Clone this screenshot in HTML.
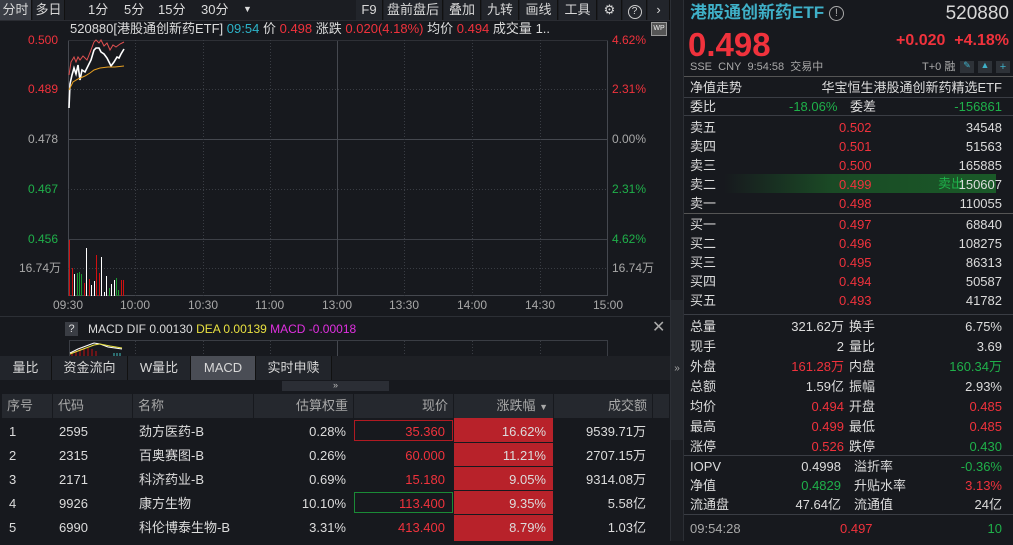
<!DOCTYPE html>
<html><head><meta charset="utf-8">
<style>
*{margin:0;padding:0;box-sizing:border-box}
body{width:1013px;height:541px;background:#17191e;font-family:"Liberation Sans","Noto Sans CJK SC",sans-serif;font-size:13px;color:#d0d0d0;position:relative;overflow:hidden}
.a{position:absolute;white-space:nowrap;line-height:1}
.r{color:#f0323c}.g{color:#1fb04a}.w{color:#dcdcdc}.gy{color:#a8a8a8}
.tb{position:absolute;top:0;height:20px;background:#22252b;border-right:1px solid #111;line-height:20px;text-align:center;color:#d8d8d8;font-size:13px}
.hl{position:absolute;height:1px;background:#3a3d44}
.th{position:absolute;top:394px;height:24px;background:#25282e;border-right:1px solid #17191e;color:#a8a8a8;line-height:24px;padding:0 5px}
</style></head><body>
<!-- toolbar -->
<div class="a" style="left:0;top:0;width:670px;height:20px;background:#1b1d22"></div>
<div class="tb" style="left:0;width:32px;background:#3a3d45">分时</div>
<div class="tb" style="left:33px;width:32px">多日</div>
<div class="a w" style="left:88px;top:3px">1分</div>
<div class="a w" style="left:124px;top:3px">5分</div>
<div class="a w" style="left:158px;top:3px">15分</div>
<div class="a w" style="left:201px;top:3px">30分</div>
<div class="a w" style="left:243px;top:5px;font-size:9px">▼</div>
<div class="tb" style="left:356px;width:27px">F9</div>
<div class="tb" style="left:384px;width:59px">盘前盘后</div>
<div class="tb" style="left:444px;width:37px">叠加</div>
<div class="tb" style="left:482px;width:37px">九转</div>
<div class="tb" style="left:520px;width:38px">画线</div>
<div class="tb" style="left:559px;width:38px">工具</div>
<div class="tb" style="left:598px;width:24px">⚙</div>
<div class="tb" style="left:623px;width:24px"><span style="display:inline-block;width:14px;height:14px;border:1px solid #ccc;border-radius:50%;line-height:12px;font-size:10px">?</span></div>
<div class="tb" style="left:648px;width:22px">›</div>
<div class="hl" style="left:0;top:20px;width:670px;background:#2a2c32"></div>
<!-- chart header -->
<div class="a" style="left:70px;top:22px;font-size:13px"><span class="w">520880[港股通创新药ETF]</span> <span style="color:#2cb3c8">09:54</span> <span class="w">价</span> <span class="r">0.498</span> <span class="w">涨跌</span> <span class="r">0.020(4.18%)</span> <span class="w">均价</span> <span class="r">0.494</span> <span class="w">成交量</span> <span class="w">1..</span></div>
<div class="a" style="left:651px;top:22px;width:16px;height:14px;border:1px solid #999;background:#555;font-size:7px;color:#eee;text-align:center;line-height:12px">WP</div>
<!-- chart svg -->
<svg class="a" style="left:0;top:0" width="670" height="320">
<g stroke="#3a3d44" stroke-width="1" fill="none">
<line x1="68" y1="139.5" x2="608" y2="139.5" stroke="#45484f"/>
<line x1="68" y1="239.5" x2="608" y2="239.5" stroke="#3d4047"/>
<line x1="68.5" y1="40" x2="68.5" y2="296" stroke="#45484f"/>
<line x1="337.5" y1="40" x2="337.5" y2="296" stroke="#45484f"/>
<line x1="607.5" y1="40" x2="607.5" y2="296" stroke="#45484f"/>
<line x1="68" y1="295.5" x2="608" y2="295.5" stroke="#45484f"/>
<line x1="68" y1="40.5" x2="608" y2="40.5" stroke="#2e3036"/>
</g>
<g stroke="#3a3d44" stroke-dasharray="1,2" fill="none">
<line x1="68" y1="89.5" x2="608" y2="89.5"/><line x1="68" y1="189.5" x2="608" y2="189.5"/><line x1="68" y1="268.5" x2="608" y2="268.5"/>
<line x1="135.5" y1="40" x2="135.5" y2="296"/><line x1="203.5" y1="40" x2="203.5" y2="296"/><line x1="270.5" y1="40" x2="270.5" y2="296"/><line x1="404.5" y1="40" x2="404.5" y2="296"/><line x1="472.5" y1="40" x2="472.5" y2="296"/><line x1="540.5" y1="40" x2="540.5" y2="296"/>
</g>
<polyline fill="none" stroke="#e05050" stroke-width="1" points="69,75 71,62 74,57 76,62 78,57 80,60 83,56 87,60 91,50 94,42 96,40 99,43 101,40 104,46 107,43 110,50 113,45 116,47 120,44 124,42"/>
<polyline fill="none" stroke="#fff" stroke-width="1.6" points="69,108 70,84 72,75 74,68 76,74 78,65 80,80 82,70 85,72 88,66 91,60 94,50 96,48 99,48 101,52 104,54 107,58 109,62 111,66 114,62 117,57 119,58 121,54 124,49"/>
<polyline fill="none" stroke="#e8a020" stroke-width="1" points="69,90 73,82 78,79 85,76 90,73 94,70 100,68 108,67 115,67 124,66"/>
<g stroke-width="1">
<line x1="69.5" y1="296" x2="69.5" y2="240" stroke="#d01010"/><line x1="72.5" y1="296" x2="72.5" y2="268" stroke="#d01010"/><line x1="74.5" y1="296" x2="74.5" y2="274" stroke="#fff"/><line x1="77.5" y1="296" x2="77.5" y2="273" stroke="#1a9a30"/><line x1="79.5" y1="296" x2="79.5" y2="272" stroke="#1a9a30"/><line x1="81.5" y1="296" x2="81.5" y2="274" stroke="#1a9a30"/><line x1="84.5" y1="296" x2="84.5" y2="283" stroke="#d01010"/><line x1="86.5" y1="296" x2="86.5" y2="248" stroke="#fff"/><line x1="89.5" y1="296" x2="89.5" y2="279" stroke="#d01010"/><line x1="91.5" y1="296" x2="91.5" y2="285" stroke="#fff"/><line x1="94.5" y1="296" x2="94.5" y2="281" stroke="#fff"/><line x1="96.5" y1="296" x2="96.5" y2="255" stroke="#d01010"/><line x1="99.5" y1="296" x2="99.5" y2="273" stroke="#d01010"/><line x1="101.5" y1="296" x2="101.5" y2="257" stroke="#fff"/><line x1="104.5" y1="296" x2="104.5" y2="292" stroke="#fff"/><line x1="106.5" y1="296" x2="106.5" y2="276" stroke="#fff"/><line x1="109.5" y1="296" x2="109.5" y2="288" stroke="#1a9a30"/><line x1="111.5" y1="296" x2="111.5" y2="284" stroke="#fff"/><line x1="114.5" y1="296" x2="114.5" y2="280" stroke="#fff"/><line x1="116.5" y1="296" x2="116.5" y2="278" stroke="#1a9a30"/><line x1="118.5" y1="296" x2="118.5" y2="290" stroke="#1a9a30"/><line x1="121.5" y1="296" x2="121.5" y2="280" stroke="#d01010"/><line x1="123.5" y1="296" x2="123.5" y2="280" stroke="#d01010"/>
</g>
</svg>
<div class="a r" style="left:28px;top:34px;font-size:12px">0.500</div>
<div class="a r" style="left:28px;top:83px;font-size:12px">0.489</div>
<div class="a gy" style="left:28px;top:133px;font-size:12px">0.478</div>
<div class="a g" style="left:28px;top:183px;font-size:12px">0.467</div>
<div class="a g" style="left:28px;top:233px;font-size:12px">0.456</div>
<div class="a gy" style="left:19px;top:262px;font-size:12px">16.74万</div>
<div class="a r" style="left:612px;top:34px;font-size:12px">4.62%</div>
<div class="a r" style="left:612px;top:83px;font-size:12px">2.31%</div>
<div class="a gy" style="left:612px;top:133px;font-size:12px">0.00%</div>
<div class="a g" style="left:612px;top:183px;font-size:12px">2.31%</div>
<div class="a g" style="left:612px;top:233px;font-size:12px">4.62%</div>
<div class="a gy" style="left:612px;top:262px;font-size:12px">16.74万</div>
<div class="a gy" style="left:53px;top:299px;font-size:12px">09:30</div>
<div class="a gy" style="left:120px;top:299px;font-size:12px">10:00</div>
<div class="a gy" style="left:188px;top:299px;font-size:12px">10:30</div>
<div class="a gy" style="left:255px;top:299px;font-size:12px">11:00</div>
<div class="a gy" style="left:322px;top:299px;font-size:12px">13:00</div>
<div class="a gy" style="left:389px;top:299px;font-size:12px">13:30</div>
<div class="a gy" style="left:457px;top:299px;font-size:12px">14:00</div>
<div class="a gy" style="left:525px;top:299px;font-size:12px">14:30</div>
<div class="a gy" style="left:593px;top:299px;font-size:12px">15:00</div>
<div class="hl" style="left:0;top:316px;width:670px;background:#2c2f35"></div>
<!-- MACD -->
<div class="a" style="left:65px;top:322px;width:13px;height:14px;background:#3a3d44;color:#ddd;font-size:11px;text-align:center;line-height:14px">?</div>
<div class="a" style="left:88px;top:323px;font-size:12px"><span class="w">MACD DIF 0.00130</span> <span style="color:#e8e040">DEA 0.00139</span> <span style="color:#e030e0">MACD -0.00018</span></div>
<div class="a" style="left:652px;top:320px;color:#aaa;font-size:16px">✕</div>
<svg class="a" style="left:0;top:339px" width="670" height="17"><rect x="69.5" y="1.5" width="538" height="20" fill="none" stroke="#3a3d44"/>
<g stroke="#3a3d44" stroke-dasharray="1,2"><line x1="135.5" y1="2" x2="135.5" y2="17"/><line x1="203.5" y1="2" x2="203.5" y2="17"/><line x1="270.5" y1="2" x2="270.5" y2="17"/><line x1="404.5" y1="2" x2="404.5" y2="17"/><line x1="472.5" y1="2" x2="472.5" y2="17"/><line x1="540.5" y1="2" x2="540.5" y2="17"/></g>
<line x1="337.5" y1="2" x2="337.5" y2="17" stroke="#45484f"/>
<g stroke="#c01010"><line x1="72" y1="17" x2="72" y2="13"/><line x1="76" y1="17" x2="76" y2="12"/><line x1="80" y1="17" x2="80" y2="10"/><line x1="84" y1="17" x2="84" y2="9"/><line x1="88" y1="17" x2="88" y2="9"/><line x1="92" y1="17" x2="92" y2="10"/><line x1="96" y1="17" x2="96" y2="12"/></g>
<g stroke="#40c0c0"><line x1="114" y1="17" x2="114" y2="14"/><line x1="117" y1="17" x2="117" y2="14"/><line x1="120" y1="17" x2="120" y2="14"/></g>
<polyline points="70,14 78,10 86,7 94,4 100,5 108,8 122,10" fill="none" stroke="#fff"/><polyline points="70,15 78,12 86,9 94,6 100,5 110,7 122,9" fill="none" stroke="#e8e040"/></svg>
<!-- tabs -->
<div class="a" style="left:0;top:356px;width:670px;height:24px;background:#1e2025"></div>
<div class="tb" style="top:356px;left:0;width:52px;height:24px;line-height:24px">量比</div>
<div class="tb" style="top:356px;left:52px;width:76px;height:24px;line-height:24px">资金流向</div>
<div class="tb" style="top:356px;left:128px;width:63px;height:24px;line-height:24px">W量比</div>
<div class="tb" style="top:356px;left:191px;width:65px;height:24px;line-height:24px;background:#4a4d55">MACD</div>
<div class="tb" style="top:356px;left:256px;width:76px;height:24px;line-height:24px">实时申赎</div>
<div class="a" style="left:282px;top:381px;width:107px;height:10px;background:#2b2e35;color:#bbb;font-size:9px;text-align:center">»</div>
<!-- table -->
<div class="th" style="left:2px;width:51px">序号</div>
<div class="th" style="left:53px;width:80px">代码</div>
<div class="th" style="left:133px;width:121px">名称</div>
<div class="th" style="left:254px;width:100px;text-align:right">估算权重</div>
<div class="th" style="left:354px;width:100px;text-align:right">现价</div>
<div class="th" style="left:454px;width:100px;text-align:right">涨跌幅 <span style="font-size:9px">▼</span></div>
<div class="th" style="left:554px;width:99px;text-align:right">成交额</div>
<div class="th" style="left:653px;width:17px"></div>
<div class="a" style="left:454px;top:418px;width:99px;height:123px;background:#b8222a"></div>
<div class="a" style="left:454px;top:442px;width:99px;height:1px;background:#17191e"></div>
<div class="a" style="left:454px;top:466px;width:99px;height:1px;background:#17191e"></div>
<div class="a" style="left:454px;top:490px;width:99px;height:1px;background:#17191e"></div>
<div class="a" style="left:454px;top:514px;width:99px;height:1px;background:#17191e"></div>
<div class="a" style="left:354px;top:420px;width:99px;height:21px;border:1px solid #b01a22"></div>
<div class="a" style="left:354px;top:492px;width:99px;height:21px;border:1px solid #1a8a36"></div>
<div style="position:absolute;left:0;top:425px;width:670px;font-size:13px">
<div style="position:relative;height:24px"><span class="a w" style="left:9px">1</span><span class="a w" style="left:59px">2595</span><span class="a w" style="left:139px">劲方医药-B</span><span class="a w" style="right:324px">0.28%</span><span class="a r" style="right:225px">35.360</span><span class="a w" style="right:124px">16.62%</span><span class="a w" style="right:24px">9539.71万</span></div>
<div style="position:relative;height:24px"><span class="a w" style="left:9px">2</span><span class="a w" style="left:59px">2315</span><span class="a w" style="left:139px">百奥赛图-B</span><span class="a w" style="right:324px">0.26%</span><span class="a r" style="right:225px">60.000</span><span class="a w" style="right:124px">11.21%</span><span class="a w" style="right:24px">2707.15万</span></div>
<div style="position:relative;height:24px"><span class="a w" style="left:9px">3</span><span class="a w" style="left:59px">2171</span><span class="a w" style="left:139px">科济药业-B</span><span class="a w" style="right:324px">0.69%</span><span class="a r" style="right:225px">15.180</span><span class="a w" style="right:124px">9.05%</span><span class="a w" style="right:24px">9314.08万</span></div>
<div style="position:relative;height:24px"><span class="a w" style="left:9px">4</span><span class="a w" style="left:59px">9926</span><span class="a w" style="left:139px">康方生物</span><span class="a w" style="right:324px">10.10%</span><span class="a r" style="right:225px">113.400</span><span class="a w" style="right:124px">9.35%</span><span class="a w" style="right:24px">5.58亿</span></div>
<div style="position:relative;height:24px"><span class="a w" style="left:9px">5</span><span class="a w" style="left:59px">6990</span><span class="a w" style="left:139px">科伦博泰生物-B</span><span class="a w" style="right:324px">3.31%</span><span class="a r" style="right:225px">413.400</span><span class="a w" style="right:124px">8.79%</span><span class="a w" style="right:24px">1.03亿</span></div>
</div>
<!-- divider -->
<div class="a" style="left:670px;top:0;width:13px;height:541px;background:#1c1e23;border-left:1px solid #2c2f35"></div>
<div class="a" style="left:671px;top:300px;width:12px;height:140px;background:#25282d;color:#aaa;font-size:10px;text-align:center;padding-top:64px">»</div>
<!-- right panel -->
<div style="position:absolute;left:683px;top:0;width:330px;height:541px;background:#17191e;border-left:1px solid #2c2f35">
<div class="a" style="left:6px;top:4px;font-size:17px;font-weight:bold;color:#3fb0c8">港股通创新药ETF <span style="font-weight:normal;display:inline-block;width:15px;height:15px;border:1.5px solid #aaa;border-radius:50%;font-size:11px;color:#aaa;text-align:center;line-height:13px;vertical-align:2px">!</span></div>
<div class="a" style="right:4px;top:4px;font-size:19px;color:#d8d8d8">520880</div>
<div class="a r" style="left:4px;top:28px;font-size:33px;font-weight:bold">0.498</div>
<div class="a r" style="right:4px;top:33px;font-size:16px;font-weight:bold">+0.020&nbsp;&nbsp;+4.18%</div>
<div class="a gy" style="left:6px;top:62px;font-size:11px">SSE&nbsp;&nbsp;CNY&nbsp;&nbsp;9:54:58&nbsp;&nbsp;交易中</div>
<div class="a gy" style="left:238px;top:62px;font-size:11px">T+0 融</div>
<div class="a" style="left:276px;top:61px;width:14px;height:12px;background:#2e3238;color:#3fb0c8;font-size:9px;text-align:center">✎</div>
<div class="a" style="left:294px;top:61px;width:14px;height:12px;background:#2e3238;color:#3fb0c8;font-size:9px;text-align:center">▲</div>
<div class="a" style="left:312px;top:61px;width:14px;height:12px;background:#2e3238;color:#3fb0c8;font-size:11px;text-align:center;line-height:12px">+</div>
<div class="hl" style="left:0;top:76px;width:330px;background:#555"></div>
<div class="a w" style="left:6px;top:81px">净值走势</div>
<div class="a w" style="right:11px;top:81px">华宝恒生港股通创新药精选ETF</div>
<div class="hl" style="left:0;top:97px;width:330px"></div>
<div class="a w" style="left:6px;top:100px">委比</div><div class="a g" style="left:105px;top:100px">-18.06%</div><div class="a w" style="left:166px;top:100px">委差</div><div class="a g" style="right:11px;top:100px">-156861</div>
<div class="hl" style="left:0;top:115px;width:330px"></div>
<div class="a" style="left:40px;top:174px;width:272px;height:19px;background:linear-gradient(90deg,#17191e,#1a4a25 40%,#1a5a28)"></div>
<div class="a g" style="left:254px;top:177px">卖出</div>
<div class="hl" style="left:0;top:213px;width:330px;background:#555"></div>
<div class="hl" style="left:0;top:314px;width:330px"></div>
<div class="hl" style="left:0;top:455px;width:330px"></div>
<div class="hl" style="left:0;top:514px;width:330px"></div>
<div style="font-size:13px">
<span class="a w" style="left:6px;top:121px">卖五</span><span class="a r" style="left:155px;top:121px">0.502</span><span class="a w" style="right:11px;top:121px">34548</span>
<span class="a w" style="left:6px;top:140px">卖四</span><span class="a r" style="left:155px;top:140px">0.501</span><span class="a w" style="right:11px;top:140px">51563</span>
<span class="a w" style="left:6px;top:159px">卖三</span><span class="a r" style="left:155px;top:159px">0.500</span><span class="a w" style="right:11px;top:159px">165885</span>
<span class="a w" style="left:6px;top:178px">卖二</span><span class="a r" style="left:155px;top:178px">0.499</span><span class="a w" style="right:11px;top:178px">150607</span>
<span class="a w" style="left:6px;top:197px">卖一</span><span class="a r" style="left:155px;top:197px">0.498</span><span class="a w" style="right:11px;top:197px">110055</span>
<span class="a w" style="left:6px;top:218px">买一</span><span class="a r" style="left:155px;top:218px">0.497</span><span class="a w" style="right:11px;top:218px">68840</span>
<span class="a w" style="left:6px;top:237px">买二</span><span class="a r" style="left:155px;top:237px">0.496</span><span class="a w" style="right:11px;top:237px">108275</span>
<span class="a w" style="left:6px;top:256px">买三</span><span class="a r" style="left:155px;top:256px">0.495</span><span class="a w" style="right:11px;top:256px">86313</span>
<span class="a w" style="left:6px;top:275px">买四</span><span class="a r" style="left:155px;top:275px">0.494</span><span class="a w" style="right:11px;top:275px">50587</span>
<span class="a w" style="left:6px;top:294px">买五</span><span class="a r" style="left:155px;top:294px">0.493</span><span class="a w" style="right:11px;top:294px">41782</span>

<span class="a w" style="left:6px;top:320px">总量</span><span class="a w" style="right:169px;top:320px">321.62万</span><span class="a w" style="left:165px;top:320px">换手</span><span class="a w" style="right:11px;top:320px">6.75%</span>
<span class="a w" style="left:6px;top:340px">现手</span><span class="a w" style="right:169px;top:340px">2</span><span class="a w" style="left:165px;top:340px">量比</span><span class="a w" style="right:11px;top:340px">3.69</span>
<span class="a w" style="left:6px;top:360px">外盘</span><span class="a r" style="right:169px;top:360px">161.28万</span><span class="a w" style="left:165px;top:360px">内盘</span><span class="a g" style="right:11px;top:360px">160.34万</span>
<span class="a w" style="left:6px;top:380px">总额</span><span class="a w" style="right:169px;top:380px">1.59亿</span><span class="a w" style="left:165px;top:380px">振幅</span><span class="a w" style="right:11px;top:380px">2.93%</span>
<span class="a w" style="left:6px;top:400px">均价</span><span class="a r" style="right:169px;top:400px">0.494</span><span class="a w" style="left:165px;top:400px">开盘</span><span class="a r" style="right:11px;top:400px">0.485</span>
<span class="a w" style="left:6px;top:420px">最高</span><span class="a r" style="right:169px;top:420px">0.499</span><span class="a w" style="left:165px;top:420px">最低</span><span class="a r" style="right:11px;top:420px">0.485</span>
<span class="a w" style="left:6px;top:440px">涨停</span><span class="a r" style="right:169px;top:440px">0.526</span><span class="a w" style="left:165px;top:440px">跌停</span><span class="a g" style="right:11px;top:440px">0.430</span>

<span class="a w" style="left:6px;top:460px">IOPV</span><span class="a w" style="right:172px;top:460px">0.4998</span><span class="a w" style="left:170px;top:460px">溢折率</span><span class="a g" style="right:11px;top:460px">-0.36%</span>
<span class="a w" style="left:6px;top:479px">净值</span><span class="a g" style="right:172px;top:479px">0.4829</span><span class="a w" style="left:170px;top:479px">升贴水率</span><span class="a r" style="right:11px;top:479px">3.13%</span>
<span class="a w" style="left:6px;top:498px">流通盘</span><span class="a w" style="right:172px;top:498px">47.64亿</span><span class="a w" style="left:170px;top:498px">流通值</span><span class="a w" style="right:11px;top:498px">24亿</span>

<span class="a gy" style="left:6px;top:522px">09:54:28</span><span class="a r" style="left:156px;top:522px">0.497</span><span class="a g" style="right:11px;top:522px">10</span>
</div>
</div>
</body></html>
